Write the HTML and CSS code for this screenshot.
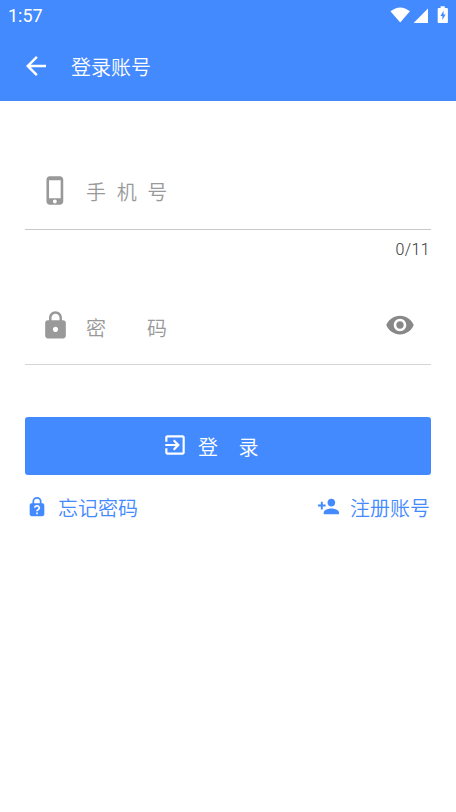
FILE: index.html
```html
<!DOCTYPE html>
<html lang="zh-CN">
<head>
<meta charset="utf-8">
<title>登录账号</title>
<link rel="stylesheet" href="styles.css">
</head>
<body>
<header class="header">
  <div class="status">
    <span class="clock">1:57</span>
    <svg class="status-icons" viewBox="0 0 60 20" width="60" height="20">
      <path d="M.5 4.200Q10.200-3.400 19.900 4.200L10.200 15.500z"/>
      <path d="M38 1.500V16H23.600z"/>
      <path fill-rule="evenodd" d="M50.600-.8h4.200v1.800h2.200q.9 0 .9.900v13.200q0 .9-.9.900h-8.400q-.9 0-.9-.9V1.900q0-.9.900-.9h2zM53.600 3.800l-3.200 5.200h2v4l3.200-5.400h-2z"/>
    </svg>
  </div>
  <div class="toolbar">
    <svg class="back" viewBox="0 0 24 24"><path d="M20 11H7.830l5.590-5.590L12 4l-8 8 8 8 1.410-1.410L7.830 13H20v-2z"/></svg>
    <h1 class="title">登录账号</h1>
  </div>
</header>
<main class="form">
  <div class="field">
    <svg class="field-icon" viewBox="0 0 24 24"><path d="M15.500 1h-8C6.120 1 5 2.120 5 3.500v17C5 21.880 6.120 23 7.500 23h8c1.380 0 2.500-1.120 2.500-2.500v-17C18 2.120 16.880 1 15.500 1zm-4 21c-.83 0-1.500-.67-1.500-1.500s.67-1.500 1.500-1.500 1.500.67 1.500 1.500-.67 1.500-1.500 1.500zm4.500-4H7V4h9v14z"/></svg>
    <span class="hint hint-phone">手 机 号</span>
  </div>
  <div class="counter">0/11</div>
  <div class="field field-password">
    <svg class="field-icon" viewBox="0 0 24 24"><path d="M18 8h-1V6c0-2.760-2.240-5-5-5S7 3.240 7 6v2H6c-1.100 0-2 .9-2 2v10c0 1.100.9 2 2 2h12c1.100 0 2-.9 2-2V10c0-1.100-.9-2-2-2zm-6 9c-1.100 0-2-.9-2-2s.9-2 2-2 2 .9 2 2-.9 2-2 2zm3.100-9H8.900V6c0-1.710 1.390-3.100 3.100-3.100s3.100 1.390 3.100 3.100v2z"/></svg>
    <span class="hint hint-password">密 码</span>
    <svg class="eye" viewBox="0 0 24 24"><path d="M12 4.500C7 4.500 2.730 7.610 1 12c1.730 4.390 6 7.500 11 7.500s9.270-3.110 11-7.500c-1.730-4.390-6-7.500-11-7.500zM12 17c-2.760 0-5-2.240-5-5s2.240-5 5-5 5 2.240 5 5-2.240 5-5 5zm0-8c-1.660 0-3 1.340-3 3s1.340 3 3 3 3-1.340 3-3-1.340-3-3-3z"/></svg>
  </div>
  <button class="submit" type="button">
    <svg class="submit-icon" viewBox="0 0 24 24"><path d="M10.090 15.590L11.500 17l5-5-5-5-1.410 1.410L12.670 11H3v2h9.670l-2.580 2.590zM19 3H5c-1.110 0-2 .9-2 2v4h2V5h14v14H5v-4H3v4c0 1.100.89 2 2 2h14c1.100 0 2-.9 2-2V5c0-1.100-.9-2-2-2z"/></svg>
    <span class="submit-text">登 录</span>
  </button>
  <nav class="links">
    <a class="link">
      <svg class="lock-help" viewBox="0 0 24 24"><path fill-rule="evenodd" d="M18 8h-1V6A5 5 0 0 0 7 6v2H6a2 2 0 0 0-2 2v10a2 2 0 0 0 2 2h12a2 2 0 0 0 2-2V10a2 2 0 0 0-2-2zM8.900 8V6a3.100 3.100 0 0 1 6.200 0v2z"/><path class="question" d="M9.500 12.900a2.500 2.200 0 1 1 3.600 2q-1.100.6-1.100 1.700M12 18v1.900"/></svg>
      <span class="link-text">忘记密码</span>
    </a>
    <a class="link">
      <svg class="person-add" viewBox="0 0 24 24"><path d="M15 12c2.210 0 4-1.790 4-4s-1.790-4-4-4-4 1.790-4 4 1.790 4 4 4zm-9-2V7H4v3H1v2h3v3h2v-3h3v-2H6zm9 4c-2.670 0-8 1.340-8 4v2h16v-2c0-2.660-5.330-4-8-4z"/></svg>
      <span class="link-text">注册账号</span>
    </a>
  </nav>
</main>
</body>
</html>
```
FILE: styles.css
```css
* { box-sizing: border-box; }
body {
  margin: 0;
  background: #fff;
  font-family: "Noto Sans CJK SC", sans-serif;
  font-size: 20px;
  font-weight: 350;
}
svg { display: block; flex: none; fill: currentColor; overflow: visible; }
.header { height: 101px; background: #448aff; color: #fff; }
.status {
  height: 32px;
  padding: 0 6px 0 8px;
  display: flex;
  justify-content: space-between;
  align-items: center;
}
.clock { font-family: Roboto, sans-serif; font-size: 18px; font-weight: 400; line-height: 32px; }
.status-icons { margin-top: 2px; }
.toolbar { height: 69px; padding-left: 20.500px; display: flex; align-items: center; }
.back { width: 30px; height: 30px; margin-bottom: 1px; }
.title { margin: 0 0 0 20.500px; font-size: 20px; font-weight: 350; line-height: 30px; }
.form { padding: 50px 25px 0; }
.field {
  height: 79px;
  padding: 0 16px 0 15px;
  border-bottom: 1px solid #c8c8c8;
  display: flex;
  align-items: center;
  color: #999;
}
.field-password { border-color: #d4d4d4; }
.field-icon { width: 31px; height: 31px; margin-top: 1px; }
.hint { margin-left: 15px; padding-top: 4px; line-height: 30px; }
.hint-phone { word-spacing: 6.200px; }
.hint-password { padding-top: 6px; word-spacing: 36.500px; }
.counter {
  height: 56px;
  padding: 10px 1px 0 0;
  text-align: right;
  font-family: Roboto, sans-serif;
  font-size: 16px;
  line-height: 20px;
  font-weight: 300;
  color: #333;
  letter-spacing: .4px;
}
.eye { width: 30px; height: 30px; margin-left: auto; color: #888; }
.submit {
  width: 100%;
  height: 58px;
  margin-top: 52px;
  padding: 0 0 0 137px;
  border: 0;
  border-radius: 3px;
  background: #448aff;
  color: #fff;
  font: inherit;
  display: flex;
  align-items: center;
}
.submit-icon { width: 26px; height: 26px; margin-bottom: 2px; }
.submit-text { margin-left: 10px; padding-top: 1px; word-spacing: 16px; line-height: 30px; }
.links { margin-top: 18px; display: flex; justify-content: space-between; color: #448aff; }
.link { display: flex; align-items: center; line-height: 30px; }
.link:last-child { margin-right: 1px; }
.lock-help { width: 22px; height: 22px; margin: -2px 10.500px 0 .5px; }
.question { fill: none; stroke: #fff; stroke-width: 1.800; }
.person-add { width: 23px; height: 23px; margin: -3px 10px 0 0; }
```
